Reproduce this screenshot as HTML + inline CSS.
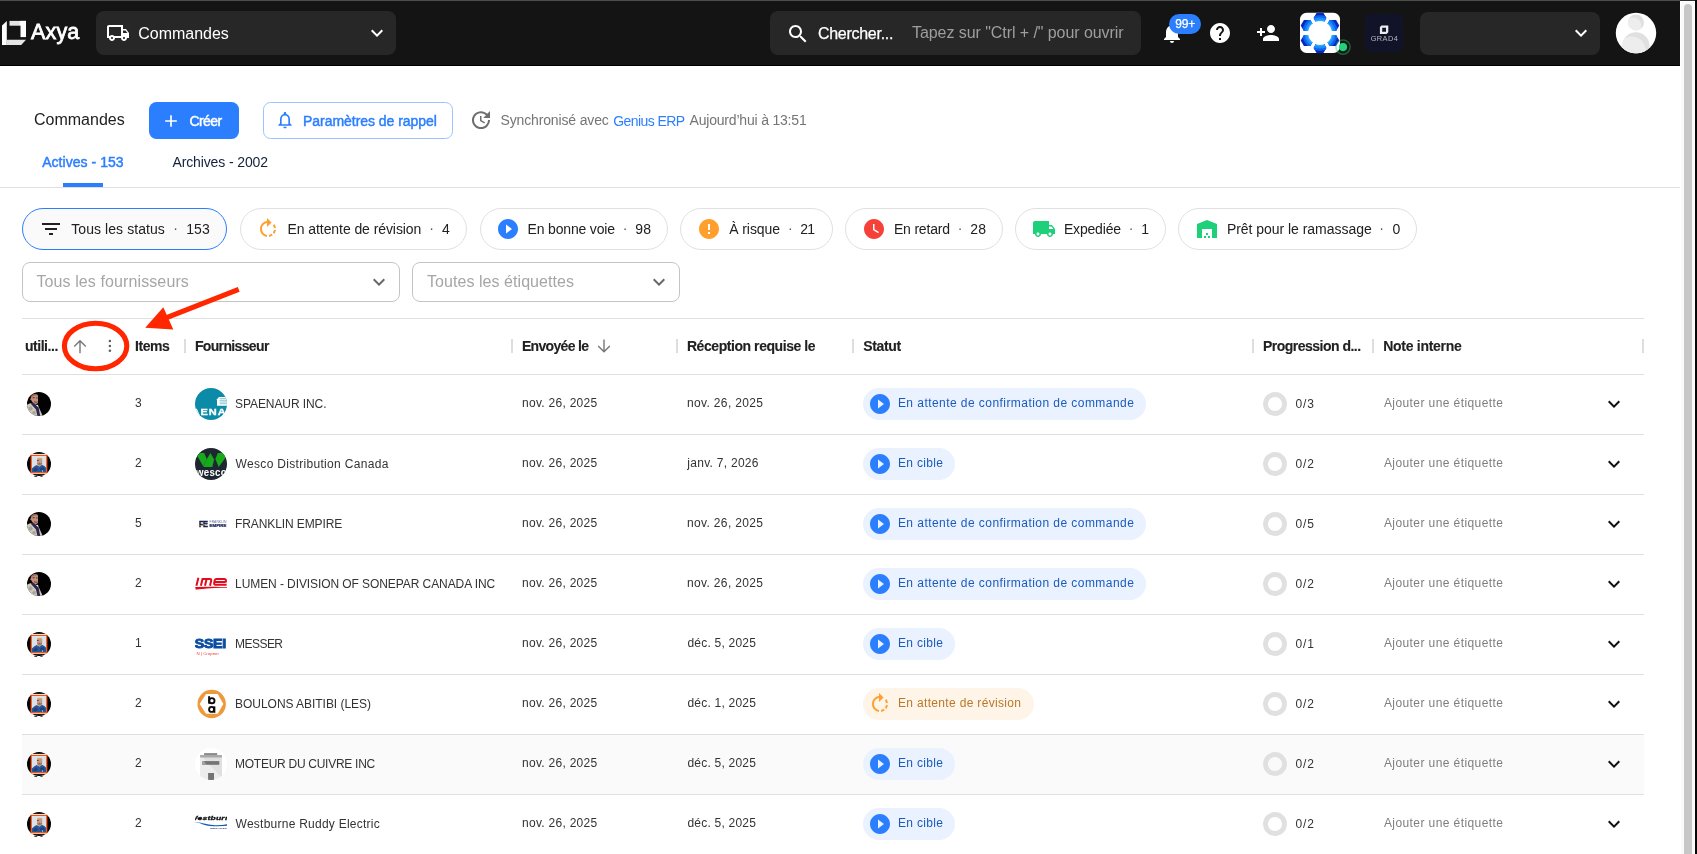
<!DOCTYPE html>
<html lang="fr"><head><meta charset="utf-8"><title>Axya - Commandes</title>
<style>
html,body{margin:0;padding:0}
body{width:1697px;height:854px;overflow:hidden;background:#fff;position:relative;font-family:"Liberation Sans",Arial,sans-serif}
.a{position:absolute;box-sizing:border-box;display:block}
.t{position:absolute;white-space:pre;line-height:normal}
</style></head><body><div class="a" style="left:0;top:0;width:1697px;height:854px;overflow:hidden;will-change:transform">
<div class="a" style="left:0px;top:0px;width:1680px;height:65px;background:#141414"></div>
<div class="a" style="left:0px;top:65px;width:1680px;height:1px;background:#000"></div>
<div class="a" style="left:0px;top:0px;width:1680px;height:1px;background:#4a4f47"></div>
<div class="a" style="left:1680px;top:0px;width:15px;height:1px;background:#2b3029"></div>
<div class="a" style="left:1680px;top:1px;width:15px;height:853px;background:#fff"></div>
<div class="a" style="left:1681px;top:2px;width:13px;height:852px;background:#fafafa"></div>
<div class="a" style="left:1684px;top:4px;width:8px;height:856px;background:#c7c7c7;border-radius:4px"></div>
<div class="a" style="left:1695px;top:0px;width:2px;height:854px;background:#050807"></div>
<svg class="a" style="left:0;top:18px" width="30" height="30" viewBox="0 18 30 30">
<defs><linearGradient id="lg1" x1="0" x2="1" y1="0" y2="0"><stop offset="0" stop-color="#e4e4e4"/><stop offset=".58" stop-color="#e4e4e4"/><stop offset=".68" stop-color="#fff"/><stop offset="1" stop-color="#fff"/></linearGradient>
<linearGradient id="lg2" x1="0" x2="1" y1="0" y2="0"><stop offset="0" stop-color="#fff"/><stop offset=".05" stop-color="#d8d8d8"/><stop offset=".14" stop-color="#e6e6e6"/><stop offset="1" stop-color="#e6e6e6"/></linearGradient></defs>
<path fill="#fff" d="M2 25.4 L6.8 20.9 V44.9 H2 Z"/>
<rect x="9.5" y="20.9" width="16.5" height="4.8" fill="url(#lg1)"/>
<rect x="20.5" y="20.9" width="5.5" height="16.2" fill="#fff"/>
<path fill="url(#lg2)" d="M6.8 39.8 H26 L21.2 44.9 H6.8 Z"/>
</svg>
<div class="a" style="left:96px;top:11px;width:300px;height:44px;background:#272727;border-radius:8px"></div>
<svg class="a" style="left:106px;top:21px" width="24" height="24" viewBox="0 0 24 24"><path fill="#fff" d="M20 8h-3V4H3c-1.1 0-2 .9-2 2v11h2c0 1.66 1.34 3 3 3s3-1.34 3-3h6c0 1.66 1.34 3 3 3s3-1.34 3-3h2v-5l-3-4zm-.5 1.5l1.96 2.5H17V9.5h2.5zM6 18c-.55 0-1-.45-1-1s.45-1 1-1 1 .45 1 1-.45 1-1 1zm2.22-3c-.55-.61-1.33-1-2.22-1s-1.67.39-2.22 1H3V6h12v9H8.22zM18 18c-.55 0-1-.45-1-1s.45-1 1-1 1 .45 1 1-.45 1-1 1z"/></svg>
<svg class="a" style="left:365px;top:21px" width="24" height="24" viewBox="0 0 24 24"><path fill="#fff" d="M7.41 8.59L12 13.17l4.59-4.58L18 10l-6 6-6-6 1.41-1.41z"/></svg>
<div class="a" style="left:770px;top:11px;width:370.5px;height:43.5px;background:#272727;border-radius:8px"></div>
<svg class="a" style="left:785.75px;top:22px" width="24" height="24" viewBox="0 0 24 24"><path fill="#fff" d="M15.5 14h-.79l-.28-.27C15.41 12.59 16 11.11 16 9.5 16 5.91 13.09 3 9.5 3S3 5.91 3 9.5 5.91 16 9.5 16c1.61 0 3.09-.59 4.23-1.57l.27.28v.79l5 4.99L20.49 19l-4.99-5zm-6 0C7.01 14 5 11.99 5 9.5S7.01 5 9.5 5 14 7.01 14 9.5 11.99 14 9.5 14z"/></svg>
<svg class="a" style="left:1160px;top:21px" width="24" height="24" viewBox="0 0 24 24"><path fill="#fff" d="M12 22c1.1 0 2-.9 2-2h-4c0 1.1.89 2 2 2zm6-6v-5c0-3.07-1.64-5.64-4.5-6.32V4c0-.83-.67-1.5-1.5-1.5s-1.5.67-1.5 1.5v.68C7.63 5.36 6 7.92 6 11v5l-2 2v1h16v-1l-2-2z"/></svg>
<div class="a" style="left:1169px;top:14px;width:32px;height:20px;background:#2b7fff;border-radius:10px"></div>
<svg class="a" style="left:1208px;top:21px" width="24" height="24" viewBox="0 0 24 24"><path fill="#fff" d="M12 2C6.48 2 2 6.48 2 12s4.48 10 10 10 10-4.48 10-10S17.52 2 12 2zm1 17h-2v-2h2v2zm2.07-7.75l-.9.92C13.45 12.9 13 13.5 13 15h-2v-.5c0-1.1.45-2.1 1.17-2.83l1.24-1.26c.37-.36.59-.86.59-1.41 0-1.1-.9-2-2-2s-2 .9-2 2H8c0-2.21 1.79-4 4-4s4 1.79 4 4c0 .88-.36 1.68-.93 2.25z"/></svg>
<svg class="a" style="left:1256px;top:21px" width="24" height="24" viewBox="0 0 24 24"><path fill="#fff" d="M15 12c2.21 0 4-1.79 4-4s-1.79-4-4-4-4 1.79-4 4 1.79 4 4 4zm-9-2V7H4v3H1v2h3v3h2v-3h3v-2H6zm9 4c-2.67 0-8 1.34-8 4v2h16v-2c0-2.66-5.33-4-8-4z"/></svg>
<svg class="a" style="left:1296px;top:9px" width="58" height="50" viewBox="1296 9 58 50"><defs><clipPath id="ac"><rect x="1300" y="12.8" width="40" height="40.2" rx="6.5"/></clipPath><clipPath id="ah"><polygon points="1326.40,18.10 1323.20,23.64 1316.80,23.64 1313.60,18.10 1316.80,12.56 1323.20,12.56"/><polygon points="1339.30,25.55 1336.10,31.09 1329.70,31.09 1326.50,25.55 1329.70,20.01 1336.10,20.01"/><polygon points="1339.30,40.45 1336.10,45.99 1329.70,45.99 1326.50,40.45 1329.70,34.91 1336.10,34.91"/><polygon points="1326.40,47.90 1323.20,53.44 1316.80,53.44 1313.60,47.90 1316.80,42.36 1323.20,42.36"/><polygon points="1313.50,40.45 1310.30,45.99 1303.90,45.99 1300.70,40.45 1303.90,34.91 1310.30,34.91"/><polygon points="1313.50,25.55 1310.30,31.09 1303.90,31.09 1300.70,25.55 1303.90,20.01 1310.30,20.01"/></clipPath></defs><rect x="1300" y="12.8" width="40" height="40.2" rx="6.5" fill="#fff"/><g clip-path="url(#ac)"><g clip-path="url(#ah)"><circle cx="1320" cy="33" r="30" fill="#0a27bd"/><circle cx="1320" cy="33" r="17.8" fill="#0c63ee"/><circle cx="1320" cy="33" r="15.4" fill="#1b8efa"/><circle cx="1320" cy="33" r="13.4" fill="#2aa6ff"/></g><circle cx="1320" cy="33" r="11.9" fill="#fff"/></g><circle cx="1343" cy="47.1" r="7.1" fill="none" stroke="rgba(31,208,122,.42)" stroke-width="1.5"/><circle cx="1343" cy="47.1" r="4.1" fill="#1fd47c"/></svg>
<div class="a" style="left:1365px;top:14px;width:38px;height:38px;background:#111428;border-radius:6px"></div>
<svg class="a" style="left:1378px;top:24px" width="12" height="12" viewBox="1378 24 12 12"><path fill="#ececec" fill-rule="evenodd" d="M1379.9 27 L1381.6 25.4 H1388.3 V32.3 L1386.6 34 H1379.9 Z M1382.2 27.7 V31.7 H1386 V27.7 Z"/></svg>
<div class="a" style="left:1420px;top:11.5px;width:180px;height:43.0px;background:#272727;border-radius:8px"></div>
<svg class="a" style="left:1569px;top:21px" width="24" height="24" viewBox="0 0 24 24"><path fill="#fff" d="M7.41 8.59L12 13.17l4.59-4.58L18 10l-6 6-6-6 1.41-1.41z"/></svg>
<svg class="a" style="left:1615px;top:12px" width="42" height="42" viewBox="-1 -1 42 42"><defs><clipPath id="uc"><circle cx="20" cy="20" r="20.2"/></clipPath><clipPath id="uh"><circle cx="20" cy="9.4" r="8"/></clipPath><clipPath id="ub"><circle cx="19.9" cy="32.8" r="13.6"/></clipPath></defs><circle cx="20" cy="20" r="20.2" fill="#fff"/><g clip-path="url(#uc)"><circle cx="20" cy="9.4" r="8" fill="#e0e0e0"/><g clip-path="url(#uh)"><circle cx="17" cy="12.6" r="8.2" fill="#ededed"/></g><circle cx="19.9" cy="32.8" r="13.6" fill="#e0e0e0"/><g clip-path="url(#ub)"><circle cx="15.6" cy="37.6" r="14" fill="#ededed"/></g></g></svg>
<div class="a" style="left:149px;top:102px;width:90.25px;height:36.75px;background:#2b7fff;border-radius:7.5px"></div>
<svg class="a" style="left:161.3px;top:110.5px" width="20" height="20" viewBox="0 0 24 24"><path fill="#fff" d="M19 13h-6v6h-2v-6H5v-2h6V5h2v6h6v2z"/></svg>
<div class="a" style="left:263px;top:102px;width:190px;height:36.75px;border:1px solid #9cc3ff;border-radius:7.5px;background:#fff"></div>
<svg class="a" style="left:275px;top:110px" width="20" height="20" viewBox="0 0 24 24"><path fill="#2b7fff" d="M12 22c1.1 0 2-.9 2-2h-4c0 1.1.9 2 2 2zm6-6v-5c0-3.07-1.63-5.64-4.5-6.32V4c0-.83-.67-1.5-1.5-1.5s-1.5.67-1.5 1.5v.68C7.64 5.36 6 7.92 6 11v5l-2 2v1h16v-1l-2-2zm-2 1H8v-6c0-2.48 1.51-4.5 4-4.5s4 2.02 4 4.5v6z"/></svg>
<svg class="a" style="left:469px;top:108.2px" width="24" height="24" viewBox="0 0 24 24"><path fill="#6e6e6e" d="M21 10.12h-6.78l2.74-2.82c-2.73-2.7-7.15-2.8-9.88-.1-2.73 2.71-2.73 7.08 0 9.79s7.15 2.71 9.88 0C18.32 15.65 19 14.08 19 12.1h2c0 1.98-.88 4.55-2.64 6.29-3.51 3.48-9.21 3.48-12.72 0-3.5-3.47-3.53-9.11-.02-12.58s9.14-3.47 12.65 0L21 3v7.12zM12.5 8v4.25l3.5 2.08-.72 1.21L11 13V8h1.5z"/></svg>
<div class="a" style="left:0px;top:187px;width:1680px;height:1px;background:#e0e0e0"></div>
<div class="a" style="left:63px;top:183px;width:40px;height:4px;background:#2b7fff"></div>
<div class="a" style="left:22px;top:208px;width:205px;height:42px;border:1px solid #2b7fff;border-radius:21px;background:#fafafa"></div>
<svg class="a" style="left:39px;top:217px" width="24" height="24" viewBox="0 0 24 24"><path fill="#212121" d="M10 18h4v-2h-4v2zM3 6v2h18V6H3zm3 7h12v-2H6v2z"/></svg>
<div class="a" style="left:239.5px;top:208px;width:227.0px;height:42px;border:1px solid #e0e0e0;border-radius:21px;background:#fff"></div>
<svg class="a" style="left:256px;top:217px" width="24" height="24" viewBox="0 0 24 24"><path fill="#ffa02e" d="M15.55 5.55L11 1v3.07C7.06 4.56 4 7.92 4 12s3.05 7.44 7 7.93v-2.02c-2.84-.48-5-2.94-5-5.91s2.16-5.43 5-5.91V10l4.55-4.45zM19.93 11c-.17-1.39-.72-2.73-1.62-3.89l-1.42 1.42c.54.75.88 1.6 1.02 2.47h2.02zM13 17.9v2.02c1.39-.17 2.74-.71 3.9-1.61l-1.44-1.44c-.75.54-1.59.89-2.46 1.03zm3.89-2.42l1.42 1.41c.9-1.16 1.45-2.5 1.62-3.89h-2.02c-.14.87-.48 1.72-1.02 2.48z"/></svg>
<div class="a" style="left:479.5px;top:208px;width:188.25px;height:42px;border:1px solid #e0e0e0;border-radius:21px;background:#fff"></div>
<svg class="a" style="left:496.25px;top:217px" width="24" height="24" viewBox="0 0 24 24"><path fill="#2b7fff" d="M12 2C6.48 2 2 6.48 2 12s4.48 10 10 10 10-4.48 10-10S17.52 2 12 2zm-2 14.5v-9l6 4.5-6 4.5z"/></svg>
<div class="a" style="left:680.25px;top:208px;width:152.25px;height:42px;border:1px solid #e0e0e0;border-radius:21px;background:#fff"></div>
<svg class="a" style="left:697px;top:217px" width="24" height="24" viewBox="0 0 24 24"><path fill="#ffa02e" d="M12 2C6.48 2 2 6.48 2 12s4.48 10 10 10 10-4.48 10-10S17.52 2 12 2zm1 15h-2v-2h2v2zm0-4h-2V7h2v6z"/></svg>
<div class="a" style="left:845px;top:208px;width:158px;height:42px;border:1px solid #e0e0e0;border-radius:21px;background:#fff"></div>
<svg class="a" style="left:862px;top:217px" width="24" height="24" viewBox="0 0 24 24"><path fill="#f6413a" d="M12 2C6.5 2 2 6.5 2 12s4.5 10 10 10 10-4.5 10-10S17.5 2 12 2zm4.2 14.2L11 13V7h1.5v5.2l4.5 2.7-.8 1.3z"/></svg>
<div class="a" style="left:1015px;top:208px;width:150.5px;height:42px;border:1px solid #e0e0e0;border-radius:21px;background:#fff"></div>
<svg class="a" style="left:1032px;top:217px" width="24" height="24" viewBox="0 0 24 24"><path fill="#1fd07a" d="M20 8h-3V4H3c-1.1 0-2 .9-2 2v11h2c0 1.66 1.34 3 3 3s3-1.34 3-3h6c0 1.66 1.34 3 3 3s3-1.34 3-3h2v-5l-3-4zM6 18.5c-.83 0-1.5-.67-1.5-1.5s.67-1.5 1.5-1.5 1.5.67 1.5 1.5-.67 1.5-1.5 1.5zm13.5-9l1.96 2.5H17V9.5h2.5zm-1.5 9c-.83 0-1.5-.67-1.5-1.5s.67-1.5 1.5-1.5 1.5.67 1.5 1.5-.67 1.5-1.5 1.5z"/></svg>
<div class="a" style="left:1178px;top:208px;width:239px;height:42px;border:1px solid #e0e0e0;border-radius:21px;background:#fff"></div>
<svg class="a" style="left:1195px;top:217px" width="24" height="24" viewBox="0 0 24 24"><path fill="#1fd07a" d="M22 21V7L12 3 2 7v14h5v-9h10v9h5zm-11-2H9v2h2v-2zm2-3h-2v2h2v-2zm2 3h-2v2h2v-2z"/></svg>
<span class="t" style="left:173.17px;top:219.53px;font-size:14px;color:#555">·</span>
<span class="t" style="left:429.17px;top:219.53px;font-size:14px;color:#555">·</span>
<span class="t" style="left:622.67px;top:219.53px;font-size:14px;color:#555">·</span>
<span class="t" style="left:787.92px;top:219.53px;font-size:14px;color:#555">·</span>
<span class="t" style="left:957.67px;top:219.53px;font-size:14px;color:#555">·</span>
<span class="t" style="left:1128.67px;top:219.53px;font-size:14px;color:#555">·</span>
<span class="t" style="left:1379.17px;top:219.53px;font-size:14px;color:#555">·</span>
<div class="a" style="left:22px;top:262px;width:378px;height:40px;border:1px solid #c4c4c4;border-radius:8px;background:#fff"></div>
<div class="a" style="left:412px;top:262px;width:268px;height:40px;border:1px solid #c4c4c4;border-radius:8px;background:#fff"></div>
<svg class="a" style="left:367px;top:269.6px" width="24" height="24" viewBox="0 0 24 24"><path fill="#686868" d="M7.41 8.59L12 13.17l4.59-4.58L18 10l-6 6-6-6 1.41-1.41z"/></svg>
<svg class="a" style="left:647px;top:269.6px" width="24" height="24" viewBox="0 0 24 24"><path fill="#686868" d="M7.41 8.59L12 13.17l4.59-4.58L18 10l-6 6-6-6 1.41-1.41z"/></svg>
<div class="a" style="left:22px;top:735px;width:1622px;height:59px;background:#fafafa"></div>
<div class="a" style="left:22px;top:318px;width:1622px;height:1px;background:#e0e0e0"></div>
<div class="a" style="left:22px;top:374px;width:1622px;height:1px;background:#e0e0e0"></div>
<div class="a" style="left:22px;top:434px;width:1622px;height:1px;background:#e0e0e0"></div>
<div class="a" style="left:22px;top:494px;width:1622px;height:1px;background:#e0e0e0"></div>
<div class="a" style="left:22px;top:554px;width:1622px;height:1px;background:#e0e0e0"></div>
<div class="a" style="left:22px;top:614px;width:1622px;height:1px;background:#e0e0e0"></div>
<div class="a" style="left:22px;top:674px;width:1622px;height:1px;background:#e0e0e0"></div>
<div class="a" style="left:22px;top:734px;width:1622px;height:1px;background:#e0e0e0"></div>
<div class="a" style="left:22px;top:794px;width:1622px;height:1px;background:#e0e0e0"></div>
<div class="a" style="left:22px;top:854px;width:1622px;height:1px;background:#e0e0e0"></div>
<div class="a" style="left:184px;top:339.2px;width:2px;height:13.4px;background:#dedede"></div>
<div class="a" style="left:511px;top:339.2px;width:2px;height:13.4px;background:#dedede"></div>
<div class="a" style="left:676px;top:339.2px;width:2px;height:13.4px;background:#dedede"></div>
<div class="a" style="left:852px;top:339.2px;width:2px;height:13.4px;background:#dedede"></div>
<div class="a" style="left:1252px;top:339.2px;width:2px;height:13.4px;background:#dedede"></div>
<div class="a" style="left:1372px;top:339.2px;width:2px;height:13.4px;background:#dedede"></div>
<div class="a" style="left:1642px;top:339.2px;width:2px;height:13.4px;background:#dedede"></div>
<svg class="a" style="left:72px;top:338.5px" width="16" height="16" viewBox="0 0 16 16"><path fill="none" stroke="#787878" stroke-width="1.4" d="M8 14.2 V2 M2.2 7.6 L8 1.8 L13.8 7.6"/></svg>
<svg class="a" style="left:596px;top:338.5px" width="16" height="16" viewBox="0 0 16 16"><path fill="none" stroke="#787878" stroke-width="1.4" d="M8 .6 V13 M2.2 7 L8 12.8 L13.8 7"/></svg>
<svg class="a" style="left:104px;top:338px" width="12" height="17" viewBox="0 0 12 17"><g fill="#5e5e5e"><circle cx="5.9" cy="3" r="1.25"/><circle cx="5.9" cy="7.9" r="1.25"/><circle cx="5.9" cy="12.8" r="1.25"/></g></svg>
<svg class="a" style="left:27px;top:392px" width="24" height="24" viewBox="0 0 24 24"><defs><clipPath id="ca0"><circle cx="12" cy="12" r="12"/></clipPath></defs><circle cx="12" cy="12" r="12" fill="#020202"/><g clip-path="url(#ca0)"><path d="M-1 13.6 Q2 11.2 5 11 L11 13.4 L16 24.6 H-1 Z" fill="#cfc9bc"/><path d="M1 16 L4 14 L6 17 L3 19Z M5 20 L8 18.6 L9 21.6 L6 23Z" fill="#a9a59b"/><path d="M3.6 11.4 L6 10.6 L11.6 15.4 L13.2 24 L10.4 24 L9 17.6 Z" fill="#2b2650"/><path d="M3.9 4.6 Q5.2 1.7 8.2 1.9 Q10.4 2 11 3.4 V11 Q9.6 12.6 7.6 11.8 Q4.6 10.4 3.9 7.6 Z" fill="#c48f7b"/><path d="M3.9 4.6 Q5.2 1.7 8.2 1.9 Q10.4 2 11 3.4 Q8 2.8 5.4 4.4 Q4.6 5 4.3 6.2 Z" fill="#8b6656"/><path d="M5.6 5.4 L7.4 5 L7.6 6 L5.8 6.4Z M9 5.6 L10.6 5.4 L10.6 6.4 L9.2 6.4Z M7 9.2 Q9 10.2 10.8 9.4 L10.6 10.2 Q8.8 10.9 7 10Z" fill="#4a2f2a"/><circle cx="10.4" cy="13.6" r=".8" fill="#f4f1ea"/><circle cx="3.6" cy="7.2" r=".7" fill="#b5534a"/></g></svg>
<svg class="a" style="left:195px;top:388px" width="32" height="32" viewBox="0 0 32 32"><defs><clipPath id="l0"><circle cx="16" cy="16" r="16"/></clipPath></defs><circle cx="16" cy="16" r="16" fill="#0b8ba7"/><g clip-path="url(#l0)"><text transform="translate(-3.3 27.2) scale(1.22 1)" x="0" y="0" font-family="Liberation Sans,Arial,sans-serif" font-size="9" font-weight="700" fill="#fff" stroke="#fff" stroke-width=".35" letter-spacing="0.8">AENAU</text><path d="M22 11.2 L24 9.1 H32 V17.8 H22 Z" fill="#fff"/><path d="M24.6 10.6 H32 M24.6 12.3 H32 M24.6 14 H32 M24.6 15.7 H32" stroke="#0b8ba7" stroke-width=".6" opacity=".8"/></g></svg>
<div class="a" style="left:863px;top:388px;width:283.25px;height:32px;background:#eaf2ff;border-radius:16px"></div>
<svg class="a" style="left:868.25px;top:392px" width="24" height="24" viewBox="0 0 24 24"><path fill="#2b7fff" d="M12 2C6.48 2 2 6.48 2 12s4.48 10 10 10 10-4.48 10-10S17.52 2 12 2zm-2 14.5v-9l6 4.5-6 4.5z"/></svg>
<svg class="a" style="left:1263px;top:392px" width="24" height="24" viewBox="0 0 24 24"><circle cx="12" cy="12" r="9.5" fill="none" stroke="#e0e0e0" stroke-width="4.8"/></svg>
<svg class="a" style="left:1602.4px;top:392.0px" width="24" height="24" viewBox="0 0 24 24"><path fill="#111" d="M7.41 8.59L12 13.17l4.59-4.58L18 10l-6 6-6-6 1.41-1.41z"/></svg>
<svg class="a" style="left:27px;top:452px" width="24" height="25" viewBox="0 0 24 25"><defs><clipPath id="cb1"><circle cx="12" cy="12" r="12"/></clipPath></defs><g clip-path="url(#cb1)"><rect x="0" y="0" width="24" height="24" fill="#030303"/><rect x="3" y="1.9" width="18" height="1.1" fill="#fff"/><rect x="3" y="21.1" width="18" height="1" fill="#fff"/><rect x="4.2" y="3.4" width="15.6" height="17.3" fill="#dde0e7" stroke="#ff4d0a" stroke-width="1.15"/><path d="M4.9 20.1 V16.4 Q7 14.2 9.6 13 L12.4 14.6 L15 12.8 Q17.6 13.6 19.1 15.8 V20.1 Z" fill="#2a5596"/><path d="M6 18 L9 15.4 L11 17.8 L8 19.8Z M13 16.6 L16.4 15 L17.6 18 L14 19.4Z" fill="#1d3f7a"/><path d="M10 6.6 Q12.6 5.2 15.2 6.8 V11.6 Q14.2 14.4 12.6 14.4 Q10.8 14.2 10 11.4 Z" fill="#c99a82"/><path d="M9.9 7.4 Q10.4 5.6 12.8 5.7 Q14.8 5.8 15.3 7 Q12.6 6.4 9.9 7.4Z" fill="#d8a95c"/><path d="M10.2 10.4 Q12.6 12.6 15 10.6 V12 Q12.8 14.6 10.4 12.2Z" fill="#8d7a6c"/><circle cx="12.5" cy="11.3" r=".7" fill="#d8473f"/><circle cx="13.6" cy="8.3" r=".6" fill="#7fb2d8"/><rect x="10.2" y="8" width="1.4" height="1" fill="#3a3a3a"/><rect x="14.9" y="18.2" width=".8" height="1.6" fill="#e8e2d0"/></g><path d="M7.4 24.5 H10.2 M13.4 24.4 H15.6" stroke="#111" stroke-width=".8"/></svg>
<svg class="a" style="left:195px;top:448px" width="32" height="32" viewBox="0 0 32 32"><defs><clipPath id="l1"><circle cx="16" cy="16" r="16"/></clipPath></defs><circle cx="16" cy="16" r="16" fill="#1e2731"/><g clip-path="url(#l1)"><path d="M2 7.4 L5.2 4.9 H9.2 L11.8 11 L8.4 18.6 Z" fill="#17a81b"/><path d="M15.4 5 L19.1 11.5 L17.3 19 H8.5 L10.4 13.4 Z" fill="#17a81b"/><path d="M22.8 5 H28.6 L31 9 L23.7 19 L20.4 11 Z" fill="#17a81b"/><text transform="translate(1 27.9) scale(.88 1)" x="0" y="0" font-family="Liberation Sans,Arial,sans-serif" font-size="11" font-weight="700" fill="#fff" letter-spacing=".3">wesco</text></g></svg>
<div class="a" style="left:863px;top:448px;width:92px;height:32px;background:#eaf2ff;border-radius:16px"></div>
<svg class="a" style="left:868.25px;top:452px" width="24" height="24" viewBox="0 0 24 24"><path fill="#2b7fff" d="M12 2C6.48 2 2 6.48 2 12s4.48 10 10 10 10-4.48 10-10S17.52 2 12 2zm-2 14.5v-9l6 4.5-6 4.5z"/></svg>
<svg class="a" style="left:1263px;top:452px" width="24" height="24" viewBox="0 0 24 24"><circle cx="12" cy="12" r="9.5" fill="none" stroke="#e0e0e0" stroke-width="4.8"/></svg>
<svg class="a" style="left:1602.4px;top:452.0px" width="24" height="24" viewBox="0 0 24 24"><path fill="#111" d="M7.41 8.59L12 13.17l4.59-4.58L18 10l-6 6-6-6 1.41-1.41z"/></svg>
<svg class="a" style="left:27px;top:512px" width="24" height="24" viewBox="0 0 24 24"><defs><clipPath id="ca2"><circle cx="12" cy="12" r="12"/></clipPath></defs><circle cx="12" cy="12" r="12" fill="#020202"/><g clip-path="url(#ca2)"><path d="M-1 13.6 Q2 11.2 5 11 L11 13.4 L16 24.6 H-1 Z" fill="#cfc9bc"/><path d="M1 16 L4 14 L6 17 L3 19Z M5 20 L8 18.6 L9 21.6 L6 23Z" fill="#a9a59b"/><path d="M3.6 11.4 L6 10.6 L11.6 15.4 L13.2 24 L10.4 24 L9 17.6 Z" fill="#2b2650"/><path d="M3.9 4.6 Q5.2 1.7 8.2 1.9 Q10.4 2 11 3.4 V11 Q9.6 12.6 7.6 11.8 Q4.6 10.4 3.9 7.6 Z" fill="#c48f7b"/><path d="M3.9 4.6 Q5.2 1.7 8.2 1.9 Q10.4 2 11 3.4 Q8 2.8 5.4 4.4 Q4.6 5 4.3 6.2 Z" fill="#8b6656"/><path d="M5.6 5.4 L7.4 5 L7.6 6 L5.8 6.4Z M9 5.6 L10.6 5.4 L10.6 6.4 L9.2 6.4Z M7 9.2 Q9 10.2 10.8 9.4 L10.6 10.2 Q8.8 10.9 7 10Z" fill="#4a2f2a"/><circle cx="10.4" cy="13.6" r=".8" fill="#f4f1ea"/><circle cx="3.6" cy="7.2" r=".7" fill="#b5534a"/></g></svg>
<svg class="a" style="left:195px;top:508px" width="32" height="32" viewBox="0 0 32 32"><text transform="translate(4 19) scale(.8 1)" x="0" y="0" font-family="Liberation Sans,Arial,sans-serif" font-size="9.2" font-weight="700" fill="#141f4d" letter-spacing="-.6" stroke="#141f4d" stroke-width=".6">FE</text><path d="M1 17.5 L7.6 16.8 L12.4 15.2 L8 17.4 Z" fill="#f2b632"/><text transform="translate(14.6 15.3) scale(.85 1)" x="0" y="0" font-family="Liberation Sans,Arial,sans-serif" font-size="4" fill="#6a7396">FRANKLIN</text><text transform="translate(14.6 19) scale(1.1 1)" x="0" y="0" font-family="Liberation Sans,Arial,sans-serif" font-size="4" font-weight="700" fill="#1b2655" stroke="#1b2655" stroke-width=".25">EMPIRE</text></svg>
<div class="a" style="left:863px;top:508px;width:283.25px;height:32px;background:#eaf2ff;border-radius:16px"></div>
<svg class="a" style="left:868.25px;top:512px" width="24" height="24" viewBox="0 0 24 24"><path fill="#2b7fff" d="M12 2C6.48 2 2 6.48 2 12s4.48 10 10 10 10-4.48 10-10S17.52 2 12 2zm-2 14.5v-9l6 4.5-6 4.5z"/></svg>
<svg class="a" style="left:1263px;top:512px" width="24" height="24" viewBox="0 0 24 24"><circle cx="12" cy="12" r="9.5" fill="none" stroke="#e0e0e0" stroke-width="4.8"/></svg>
<svg class="a" style="left:1602.4px;top:512.0px" width="24" height="24" viewBox="0 0 24 24"><path fill="#111" d="M7.41 8.59L12 13.17l4.59-4.58L18 10l-6 6-6-6 1.41-1.41z"/></svg>
<svg class="a" style="left:27px;top:572px" width="24" height="24" viewBox="0 0 24 24"><defs><clipPath id="ca3"><circle cx="12" cy="12" r="12"/></clipPath></defs><circle cx="12" cy="12" r="12" fill="#020202"/><g clip-path="url(#ca3)"><path d="M-1 13.6 Q2 11.2 5 11 L11 13.4 L16 24.6 H-1 Z" fill="#cfc9bc"/><path d="M1 16 L4 14 L6 17 L3 19Z M5 20 L8 18.6 L9 21.6 L6 23Z" fill="#a9a59b"/><path d="M3.6 11.4 L6 10.6 L11.6 15.4 L13.2 24 L10.4 24 L9 17.6 Z" fill="#2b2650"/><path d="M3.9 4.6 Q5.2 1.7 8.2 1.9 Q10.4 2 11 3.4 V11 Q9.6 12.6 7.6 11.8 Q4.6 10.4 3.9 7.6 Z" fill="#c48f7b"/><path d="M3.9 4.6 Q5.2 1.7 8.2 1.9 Q10.4 2 11 3.4 Q8 2.8 5.4 4.4 Q4.6 5 4.3 6.2 Z" fill="#8b6656"/><path d="M5.6 5.4 L7.4 5 L7.6 6 L5.8 6.4Z M9 5.6 L10.6 5.4 L10.6 6.4 L9.2 6.4Z M7 9.2 Q9 10.2 10.8 9.4 L10.6 10.2 Q8.8 10.9 7 10Z" fill="#4a2f2a"/><circle cx="10.4" cy="13.6" r=".8" fill="#f4f1ea"/><circle cx="3.6" cy="7.2" r=".7" fill="#b5534a"/></g></svg>
<svg class="a" style="left:195px;top:568px" width="32" height="32" viewBox="0 0 32 32"><g fill="none" stroke="#e30b1c" stroke-width="2"><path d="M1.4 17.8 L3.4 9.8"/><path d="M5.9 17.8 L7.5 10.9 H14.8 Q16.6 10.9 16.2 12.6 L15 17.8 M11.6 10.9 L10 17.8"/><path d="M30.6 13.9 H20 M30.9 14.6 V12.6 Q30.9 10.9 29.2 10.9 H21.6 Q20 10.9 19.7 12.4 L19.2 15 Q18.9 16.7 20.5 16.7 H31.6"/></g><path d="M.2 19 Q10 18.4 20 18.8 T32 18.9 L32 19.8 Q22 19.6 12 20.4 T.8 21.8 Z" fill="#e30b1c"/></svg>
<div class="a" style="left:863px;top:568px;width:283.25px;height:32px;background:#eaf2ff;border-radius:16px"></div>
<svg class="a" style="left:868.25px;top:572px" width="24" height="24" viewBox="0 0 24 24"><path fill="#2b7fff" d="M12 2C6.48 2 2 6.48 2 12s4.48 10 10 10 10-4.48 10-10S17.52 2 12 2zm-2 14.5v-9l6 4.5-6 4.5z"/></svg>
<svg class="a" style="left:1263px;top:572px" width="24" height="24" viewBox="0 0 24 24"><circle cx="12" cy="12" r="9.5" fill="none" stroke="#e0e0e0" stroke-width="4.8"/></svg>
<svg class="a" style="left:1602.4px;top:572.0px" width="24" height="24" viewBox="0 0 24 24"><path fill="#111" d="M7.41 8.59L12 13.17l4.59-4.58L18 10l-6 6-6-6 1.41-1.41z"/></svg>
<svg class="a" style="left:27px;top:632px" width="24" height="25" viewBox="0 0 24 25"><defs><clipPath id="cb4"><circle cx="12" cy="12" r="12"/></clipPath></defs><g clip-path="url(#cb4)"><rect x="0" y="0" width="24" height="24" fill="#030303"/><rect x="3" y="1.9" width="18" height="1.1" fill="#fff"/><rect x="3" y="21.1" width="18" height="1" fill="#fff"/><rect x="4.2" y="3.4" width="15.6" height="17.3" fill="#dde0e7" stroke="#ff4d0a" stroke-width="1.15"/><path d="M4.9 20.1 V16.4 Q7 14.2 9.6 13 L12.4 14.6 L15 12.8 Q17.6 13.6 19.1 15.8 V20.1 Z" fill="#2a5596"/><path d="M6 18 L9 15.4 L11 17.8 L8 19.8Z M13 16.6 L16.4 15 L17.6 18 L14 19.4Z" fill="#1d3f7a"/><path d="M10 6.6 Q12.6 5.2 15.2 6.8 V11.6 Q14.2 14.4 12.6 14.4 Q10.8 14.2 10 11.4 Z" fill="#c99a82"/><path d="M9.9 7.4 Q10.4 5.6 12.8 5.7 Q14.8 5.8 15.3 7 Q12.6 6.4 9.9 7.4Z" fill="#d8a95c"/><path d="M10.2 10.4 Q12.6 12.6 15 10.6 V12 Q12.8 14.6 10.4 12.2Z" fill="#8d7a6c"/><circle cx="12.5" cy="11.3" r=".7" fill="#d8473f"/><circle cx="13.6" cy="8.3" r=".6" fill="#7fb2d8"/><rect x="10.2" y="8" width="1.4" height="1" fill="#3a3a3a"/><rect x="14.9" y="18.2" width=".8" height="1.6" fill="#e8e2d0"/></g><path d="M7.4 24.5 H10.2 M13.4 24.4 H15.6" stroke="#111" stroke-width=".8"/></svg>
<svg class="a" style="left:195px;top:628px" width="32" height="32" viewBox="0 0 32 32"><defs><clipPath id="l4"><rect x="0" y="0" width="32" height="32"/></clipPath></defs><g clip-path="url(#l4)"><text transform="translate(-.3 19.9) scale(1.16 1)" x="0" y="0" font-family="Liberation Sans,Arial,sans-serif" font-size="12.2" font-weight="700" fill="#0c4da2" stroke="#0c4da2" stroke-width=".9" letter-spacing="-.2">SSEI</text><text x="1.4" y="26.6" font-family="Liberation Sans,Arial,sans-serif" font-size="4.4" fill="#e8453f">N | Cropner</text></g></svg>
<div class="a" style="left:863px;top:628px;width:92px;height:32px;background:#eaf2ff;border-radius:16px"></div>
<svg class="a" style="left:868.25px;top:632px" width="24" height="24" viewBox="0 0 24 24"><path fill="#2b7fff" d="M12 2C6.48 2 2 6.48 2 12s4.48 10 10 10 10-4.48 10-10S17.52 2 12 2zm-2 14.5v-9l6 4.5-6 4.5z"/></svg>
<svg class="a" style="left:1263px;top:632px" width="24" height="24" viewBox="0 0 24 24"><circle cx="12" cy="12" r="9.5" fill="none" stroke="#e0e0e0" stroke-width="4.8"/></svg>
<svg class="a" style="left:1602.4px;top:632.0px" width="24" height="24" viewBox="0 0 24 24"><path fill="#111" d="M7.41 8.59L12 13.17l4.59-4.58L18 10l-6 6-6-6 1.41-1.41z"/></svg>
<svg class="a" style="left:27px;top:692px" width="24" height="25" viewBox="0 0 24 25"><defs><clipPath id="cb5"><circle cx="12" cy="12" r="12"/></clipPath></defs><g clip-path="url(#cb5)"><rect x="0" y="0" width="24" height="24" fill="#030303"/><rect x="3" y="1.9" width="18" height="1.1" fill="#fff"/><rect x="3" y="21.1" width="18" height="1" fill="#fff"/><rect x="4.2" y="3.4" width="15.6" height="17.3" fill="#dde0e7" stroke="#ff4d0a" stroke-width="1.15"/><path d="M4.9 20.1 V16.4 Q7 14.2 9.6 13 L12.4 14.6 L15 12.8 Q17.6 13.6 19.1 15.8 V20.1 Z" fill="#2a5596"/><path d="M6 18 L9 15.4 L11 17.8 L8 19.8Z M13 16.6 L16.4 15 L17.6 18 L14 19.4Z" fill="#1d3f7a"/><path d="M10 6.6 Q12.6 5.2 15.2 6.8 V11.6 Q14.2 14.4 12.6 14.4 Q10.8 14.2 10 11.4 Z" fill="#c99a82"/><path d="M9.9 7.4 Q10.4 5.6 12.8 5.7 Q14.8 5.8 15.3 7 Q12.6 6.4 9.9 7.4Z" fill="#d8a95c"/><path d="M10.2 10.4 Q12.6 12.6 15 10.6 V12 Q12.8 14.6 10.4 12.2Z" fill="#8d7a6c"/><circle cx="12.5" cy="11.3" r=".7" fill="#d8473f"/><circle cx="13.6" cy="8.3" r=".6" fill="#7fb2d8"/><rect x="10.2" y="8" width="1.4" height="1" fill="#3a3a3a"/><rect x="14.9" y="18.2" width=".8" height="1.6" fill="#e8e2d0"/></g><path d="M7.4 24.5 H10.2 M13.4 24.4 H15.6" stroke="#111" stroke-width=".8"/></svg>
<svg class="a" style="left:195px;top:688px" width="32" height="32" viewBox="0 0 32 32"><circle cx="16.7" cy="16" r="14.2" fill="#ec9a3c"/><path d="M4.7 16 L11 6 H22.7 L28.3 16 L22.7 25.7 H11 Z" fill="#fff"/><g fill="none" stroke="#0b0b0b" stroke-width="1.9"><path d="M14.1 8.2 V15.7"/><circle cx="16.9" cy="12.7" r="2.6"/><circle cx="16.6" cy="21.4" r="2.5"/><path d="M19.4 18.4 V24.8"/></g></svg>
<div class="a" style="left:863px;top:688px;width:171.4px;height:32px;background:#fff4e8;border-radius:16px"></div>
<svg class="a" style="left:868px;top:692px" width="24" height="24" viewBox="0 0 24 24"><path fill="#ffa02e" d="M15.55 5.55L11 1v3.07C7.06 4.56 4 7.92 4 12s3.05 7.44 7 7.93v-2.02c-2.84-.48-5-2.94-5-5.91s2.16-5.43 5-5.91V10l4.55-4.45zM19.93 11c-.17-1.39-.72-2.73-1.62-3.89l-1.42 1.42c.54.75.88 1.6 1.02 2.47h2.02zM13 17.9v2.02c1.39-.17 2.74-.71 3.9-1.61l-1.44-1.44c-.75.54-1.59.89-2.46 1.03zm3.89-2.42l1.42 1.41c.9-1.16 1.45-2.5 1.62-3.89h-2.02c-.14.87-.48 1.72-1.02 2.48z"/></svg>
<svg class="a" style="left:1263px;top:692px" width="24" height="24" viewBox="0 0 24 24"><circle cx="12" cy="12" r="9.5" fill="none" stroke="#e0e0e0" stroke-width="4.8"/></svg>
<svg class="a" style="left:1602.4px;top:692.0px" width="24" height="24" viewBox="0 0 24 24"><path fill="#111" d="M7.41 8.59L12 13.17l4.59-4.58L18 10l-6 6-6-6 1.41-1.41z"/></svg>
<svg class="a" style="left:27px;top:752px" width="24" height="25" viewBox="0 0 24 25"><defs><clipPath id="cb6"><circle cx="12" cy="12" r="12"/></clipPath></defs><g clip-path="url(#cb6)"><rect x="0" y="0" width="24" height="24" fill="#030303"/><rect x="3" y="1.9" width="18" height="1.1" fill="#fff"/><rect x="3" y="21.1" width="18" height="1" fill="#fff"/><rect x="4.2" y="3.4" width="15.6" height="17.3" fill="#dde0e7" stroke="#ff4d0a" stroke-width="1.15"/><path d="M4.9 20.1 V16.4 Q7 14.2 9.6 13 L12.4 14.6 L15 12.8 Q17.6 13.6 19.1 15.8 V20.1 Z" fill="#2a5596"/><path d="M6 18 L9 15.4 L11 17.8 L8 19.8Z M13 16.6 L16.4 15 L17.6 18 L14 19.4Z" fill="#1d3f7a"/><path d="M10 6.6 Q12.6 5.2 15.2 6.8 V11.6 Q14.2 14.4 12.6 14.4 Q10.8 14.2 10 11.4 Z" fill="#c99a82"/><path d="M9.9 7.4 Q10.4 5.6 12.8 5.7 Q14.8 5.8 15.3 7 Q12.6 6.4 9.9 7.4Z" fill="#d8a95c"/><path d="M10.2 10.4 Q12.6 12.6 15 10.6 V12 Q12.8 14.6 10.4 12.2Z" fill="#8d7a6c"/><circle cx="12.5" cy="11.3" r=".7" fill="#d8473f"/><circle cx="13.6" cy="8.3" r=".6" fill="#7fb2d8"/><rect x="10.2" y="8" width="1.4" height="1" fill="#3a3a3a"/><rect x="14.9" y="18.2" width=".8" height="1.6" fill="#e8e2d0"/></g><path d="M7.4 24.5 H10.2 M13.4 24.4 H15.6" stroke="#111" stroke-width=".8"/></svg>
<svg class="a" style="left:195px;top:748px" width="32" height="32" viewBox="0 0 32 32"><defs><clipPath id="l6"><circle cx="16" cy="16" r="16"/></clipPath></defs><circle cx="16" cy="16" r="16" fill="#fff"/><g clip-path="url(#l6)"><rect x="5.1" y="9.6" width="21.8" height="24" fill="#ececec"/><path d="M8 9.6 H26.9 V30 Z" fill="#dfdfdf"/><rect x="9.1" y="5.1" width="13.1" height="2" fill="#8a8a8a"/><rect x="5.1" y="7" width="21.8" height="2.6" fill="#a9a9a9"/><rect x="7" y="13.1" width="17.3" height="3.7" fill="#737373"/><path d="M7 13.1 H8.8 L11.6 16.8 H7 Z" fill="#a3a3a3"/><rect x="13.1" y="25" width="5.9" height="7" fill="#737373"/></g></svg>
<div class="a" style="left:863px;top:748px;width:92px;height:32px;background:#eaf2ff;border-radius:16px"></div>
<svg class="a" style="left:868.25px;top:752px" width="24" height="24" viewBox="0 0 24 24"><path fill="#2b7fff" d="M12 2C6.48 2 2 6.48 2 12s4.48 10 10 10 10-4.48 10-10S17.52 2 12 2zm-2 14.5v-9l6 4.5-6 4.5z"/></svg>
<svg class="a" style="left:1263px;top:752px" width="24" height="24" viewBox="0 0 24 24"><circle cx="12" cy="12" r="9.5" fill="none" stroke="#e0e0e0" stroke-width="4.8"/></svg>
<svg class="a" style="left:1602.4px;top:752.0px" width="24" height="24" viewBox="0 0 24 24"><path fill="#111" d="M7.41 8.59L12 13.17l4.59-4.58L18 10l-6 6-6-6 1.41-1.41z"/></svg>
<svg class="a" style="left:27px;top:812px" width="24" height="25" viewBox="0 0 24 25"><defs><clipPath id="cb7"><circle cx="12" cy="12" r="12"/></clipPath></defs><g clip-path="url(#cb7)"><rect x="0" y="0" width="24" height="24" fill="#030303"/><rect x="3" y="1.9" width="18" height="1.1" fill="#fff"/><rect x="3" y="21.1" width="18" height="1" fill="#fff"/><rect x="4.2" y="3.4" width="15.6" height="17.3" fill="#dde0e7" stroke="#ff4d0a" stroke-width="1.15"/><path d="M4.9 20.1 V16.4 Q7 14.2 9.6 13 L12.4 14.6 L15 12.8 Q17.6 13.6 19.1 15.8 V20.1 Z" fill="#2a5596"/><path d="M6 18 L9 15.4 L11 17.8 L8 19.8Z M13 16.6 L16.4 15 L17.6 18 L14 19.4Z" fill="#1d3f7a"/><path d="M10 6.6 Q12.6 5.2 15.2 6.8 V11.6 Q14.2 14.4 12.6 14.4 Q10.8 14.2 10 11.4 Z" fill="#c99a82"/><path d="M9.9 7.4 Q10.4 5.6 12.8 5.7 Q14.8 5.8 15.3 7 Q12.6 6.4 9.9 7.4Z" fill="#d8a95c"/><path d="M10.2 10.4 Q12.6 12.6 15 10.6 V12 Q12.8 14.6 10.4 12.2Z" fill="#8d7a6c"/><circle cx="12.5" cy="11.3" r=".7" fill="#d8473f"/><circle cx="13.6" cy="8.3" r=".6" fill="#7fb2d8"/><rect x="10.2" y="8" width="1.4" height="1" fill="#3a3a3a"/><rect x="14.9" y="18.2" width=".8" height="1.6" fill="#e8e2d0"/></g><path d="M7.4 24.5 H10.2 M13.4 24.4 H15.6" stroke="#111" stroke-width=".8"/></svg>
<svg class="a" style="left:195px;top:808px" width="32" height="32" viewBox="0 0 32 32"><defs><clipPath id="l7"><rect x="0" y="0" width="32" height="32"/></clipPath><linearGradient id="wg" x1="0" x2="1" y1="0" y2="0"><stop offset="0" stop-color="#6aa7e8"/><stop offset=".25" stop-color="#0a5cc2"/><stop offset="1" stop-color="#0a4fb0"/></linearGradient></defs><g clip-path="url(#l7)"><text transform="translate(-5.6 12) scale(1.62 1)" x="0" y="0" font-family="Liberation Sans,Arial,sans-serif" font-size="5.3" font-weight="700" font-style="italic" fill="#0d0f12" stroke="#0d0f12" stroke-width=".25" letter-spacing=".12">Westburne</text><path d="M.6 14 Q5 14.2 9 15.6 T20 17.2 T32 16.2 L32 17.8 Q26 18.4 19 18.2 T8 16.4 T.6 14.6 Z" fill="url(#wg)"/><text x="15" y="20.9" font-family="Liberation Sans,Arial,sans-serif" font-size="2.5" font-weight="700" fill="#1a2a6a">RUDDY ELECTRIC</text></g></svg>
<div class="a" style="left:863px;top:808px;width:92px;height:32px;background:#eaf2ff;border-radius:16px"></div>
<svg class="a" style="left:868.25px;top:812px" width="24" height="24" viewBox="0 0 24 24"><path fill="#2b7fff" d="M12 2C6.48 2 2 6.48 2 12s4.48 10 10 10 10-4.48 10-10S17.52 2 12 2zm-2 14.5v-9l6 4.5-6 4.5z"/></svg>
<svg class="a" style="left:1263px;top:812px" width="24" height="24" viewBox="0 0 24 24"><circle cx="12" cy="12" r="9.5" fill="none" stroke="#e0e0e0" stroke-width="4.8"/></svg>
<svg class="a" style="left:1602.4px;top:812.0px" width="24" height="24" viewBox="0 0 24 24"><path fill="#111" d="M7.41 8.59L12 13.17l4.59-4.58L18 10l-6 6-6-6 1.41-1.41z"/></svg>
<span class="t" style="left:30.96px;top:20.34px;font-size:21.5px;font-weight:400;-webkit-text-stroke:0.8px #ffffff;color:#ffffff;letter-spacing:0.172px">Axya</span>
<span class="t" style="left:138.34px;top:24.72px;font-size:16px;font-weight:400;color:#ffffff;letter-spacing:-0.023px">Commandes</span>
<span class="t" style="left:817.91px;top:24.92px;font-size:16px;font-weight:400;-webkit-text-stroke:0.25px #ffffff;color:#ffffff;letter-spacing:-0.272px">Chercher...</span>
<span class="t" style="left:912.04px;top:23.52px;font-size:16px;font-weight:400;color:#9e9e9e;letter-spacing:-0.068px">Tapez sur "Ctrl + /" pour ouvrir</span>
<span class="t" style="left:1175.18px;top:16.54px;font-size:12px;font-weight:400;-webkit-text-stroke:0.25px #ffffff;color:#ffffff;letter-spacing:-0.160px">99+</span>
<span class="t" style="left:1370.66px;top:33.70px;font-size:7.4px;font-weight:400;color:#b8b8c2;letter-spacing:0.430px">GRAD4</span>
<span class="t" style="left:33.91px;top:110.52px;font-size:16px;font-weight:400;color:#212121;letter-spacing:0.011px">Commandes</span>
<span class="t" style="left:189.41px;top:112.83px;font-size:14px;font-weight:400;-webkit-text-stroke:0.45px #ffffff;color:#ffffff;letter-spacing:-0.584px">Créer</span>
<span class="t" style="left:303.04px;top:112.83px;font-size:14px;font-weight:400;-webkit-text-stroke:0.45px #2b7fff;color:#2b7fff;letter-spacing:-0.037px">Paramètres de rappel</span>
<span class="t" style="left:500.54px;top:112.33px;font-size:14px;font-weight:400;color:#757575;letter-spacing:-0.147px">Synchronisé avec</span>
<span class="t" style="left:613.28px;top:113.33px;font-size:14px;font-weight:400;color:#2b7fff;letter-spacing:-0.582px">Genius ERP</span>
<span class="t" style="left:689.53px;top:112.33px;font-size:14px;font-weight:400;color:#757575;letter-spacing:-0.193px">Aujourd’hui à 13:51</span>
<span class="t" style="left:42.16px;top:154.33px;font-size:14px;font-weight:400;-webkit-text-stroke:0.45px #2b7fff;color:#2b7fff;letter-spacing:0.041px">Actives - 153</span>
<span class="t" style="left:172.41px;top:154.33px;font-size:14px;font-weight:400;color:#14213d;letter-spacing:-0.114px">Archives - 2002</span>
<span class="t" style="left:71.28px;top:221.08px;font-size:14px;font-weight:400;color:#212121;letter-spacing:0.068px">Tous les status</span>
<span class="t" style="left:186.16px;top:221.08px;font-size:14px;font-weight:400;color:#212121;letter-spacing:0.098px">153</span>
<span class="t" style="left:287.54px;top:221.08px;font-size:14px;font-weight:400;color:#212121;letter-spacing:-0.077px">En attente de révision</span>
<span class="t" style="left:442.04px;top:221.08px;font-size:14px;font-weight:400;color:#212121;letter-spacing:0.000px">4</span>
<span class="t" style="left:527.53px;top:221.08px;font-size:14px;font-weight:400;color:#212121;letter-spacing:-0.165px">En bonne voie</span>
<span class="t" style="left:635.28px;top:221.08px;font-size:14px;font-weight:400;color:#212121;letter-spacing:0.227px">98</span>
<span class="t" style="left:729.16px;top:221.08px;font-size:14px;font-weight:400;color:#212121;letter-spacing:-0.061px">À risque</span>
<span class="t" style="left:800.16px;top:221.08px;font-size:14px;font-weight:400;color:#212121;letter-spacing:-0.773px">21</span>
<span class="t" style="left:893.91px;top:221.08px;font-size:14px;font-weight:400;color:#212121;letter-spacing:-0.177px">En retard</span>
<span class="t" style="left:970.28px;top:221.08px;font-size:14px;font-weight:400;color:#212121;letter-spacing:0.227px">28</span>
<span class="t" style="left:1063.91px;top:221.08px;font-size:14px;font-weight:400;color:#212121;letter-spacing:-0.173px">Expediée</span>
<span class="t" style="left:1141.16px;top:221.08px;font-size:14px;font-weight:400;color:#212121;letter-spacing:0.000px">1</span>
<span class="t" style="left:1226.91px;top:221.08px;font-size:14px;font-weight:400;color:#212121;letter-spacing:-0.035px">Prêt pour le ramassage</span>
<span class="t" style="left:1392.41px;top:221.08px;font-size:14px;font-weight:400;color:#212121;letter-spacing:0.000px">0</span>
<span class="t" style="left:36.41px;top:272.52px;font-size:16px;font-weight:400;color:#a6a6a6;letter-spacing:0.106px">Tous les fournisseurs</span>
<span class="t" style="left:427.04px;top:272.52px;font-size:16px;font-weight:400;color:#a6a6a6;letter-spacing:0.052px">Toutes les étiquettes</span>
<span class="t" style="left:24.91px;top:338.33px;font-size:14px;font-weight:700;-webkit-text-stroke:0.12px #212121;color:#212121;letter-spacing:-0.448px">utili...</span>
<span class="t" style="left:134.91px;top:338.33px;font-size:14px;font-weight:700;-webkit-text-stroke:0.12px #212121;color:#212121;letter-spacing:-0.412px">Items</span>
<span class="t" style="left:194.91px;top:338.33px;font-size:14px;font-weight:700;-webkit-text-stroke:0.12px #212121;color:#212121;letter-spacing:-0.648px">Fournisseur</span>
<span class="t" style="left:521.91px;top:338.33px;font-size:14px;font-weight:700;-webkit-text-stroke:0.12px #212121;color:#212121;letter-spacing:-0.678px">Envoyée le</span>
<span class="t" style="left:686.91px;top:338.33px;font-size:14px;font-weight:700;-webkit-text-stroke:0.12px #212121;color:#212121;letter-spacing:-0.435px">Réception requise le</span>
<span class="t" style="left:863.28px;top:338.33px;font-size:14px;font-weight:700;-webkit-text-stroke:0.12px #212121;color:#212121;letter-spacing:-0.348px">Statut</span>
<span class="t" style="left:1263.04px;top:338.33px;font-size:14px;font-weight:700;-webkit-text-stroke:0.12px #212121;color:#212121;letter-spacing:-0.517px">Progression d...</span>
<span class="t" style="left:1383.29px;top:338.33px;font-size:14px;font-weight:700;-webkit-text-stroke:0.12px #212121;color:#212121;letter-spacing:-0.296px">Note interne</span>
<span class="t" style="left:135.03px;top:396.14px;font-size:12px;font-weight:400;color:#333333;letter-spacing:0.450px">3</span>
<span class="t" style="left:235.08px;top:397.14px;font-size:12px;font-weight:400;color:#333333;letter-spacing:-0.090px">SPAENAUR INC.</span>
<span class="t" style="left:522.03px;top:396.14px;font-size:12px;font-weight:400;color:#333333;letter-spacing:0.279px">nov. 26, 2025</span>
<span class="t" style="left:687.03px;top:396.14px;font-size:12px;font-weight:400;color:#333333;letter-spacing:0.341px">nov. 26, 2025</span>
<span class="t" style="left:897.93px;top:396.14px;font-size:12px;font-weight:400;color:#1b5bbd;letter-spacing:0.444px">En attente de confirmation de commande</span>
<span class="t" style="left:1295.53px;top:397.14px;font-size:12px;font-weight:400;color:#333333;letter-spacing:0.814px">0/3</span>
<span class="t" style="left:1383.90px;top:396.14px;font-size:12px;font-weight:400;color:#7e7e7e;letter-spacing:0.416px">Ajouter une étiquette</span>
<span class="t" style="left:135.03px;top:456.14px;font-size:12px;font-weight:400;color:#333333;letter-spacing:0.450px">2</span>
<span class="t" style="left:235.58px;top:457.14px;font-size:12px;font-weight:400;color:#333333;letter-spacing:0.316px">Wesco Distribution Canada</span>
<span class="t" style="left:522.03px;top:456.14px;font-size:12px;font-weight:400;color:#333333;letter-spacing:0.279px">nov. 26, 2025</span>
<span class="t" style="left:687.28px;top:456.14px;font-size:12px;font-weight:400;color:#333333;letter-spacing:0.284px">janv. 7, 2026</span>
<span class="t" style="left:897.93px;top:456.14px;font-size:12px;font-weight:400;color:#1b5bbd;letter-spacing:0.334px">En cible</span>
<span class="t" style="left:1295.53px;top:457.14px;font-size:12px;font-weight:400;color:#333333;letter-spacing:0.814px">0/2</span>
<span class="t" style="left:1383.90px;top:456.14px;font-size:12px;font-weight:400;color:#7e7e7e;letter-spacing:0.416px">Ajouter une étiquette</span>
<span class="t" style="left:135.03px;top:516.14px;font-size:12px;font-weight:400;color:#333333;letter-spacing:0.450px">5</span>
<span class="t" style="left:235.08px;top:517.14px;font-size:12px;font-weight:400;color:#333333;letter-spacing:-0.111px">FRANKLIN EMPIRE</span>
<span class="t" style="left:522.03px;top:516.14px;font-size:12px;font-weight:400;color:#333333;letter-spacing:0.279px">nov. 26, 2025</span>
<span class="t" style="left:687.03px;top:516.14px;font-size:12px;font-weight:400;color:#333333;letter-spacing:0.341px">nov. 26, 2025</span>
<span class="t" style="left:897.93px;top:516.14px;font-size:12px;font-weight:400;color:#1b5bbd;letter-spacing:0.444px">En attente de confirmation de commande</span>
<span class="t" style="left:1295.53px;top:517.14px;font-size:12px;font-weight:400;color:#333333;letter-spacing:0.814px">0/5</span>
<span class="t" style="left:1383.90px;top:516.14px;font-size:12px;font-weight:400;color:#7e7e7e;letter-spacing:0.416px">Ajouter une étiquette</span>
<span class="t" style="left:135.03px;top:576.14px;font-size:12px;font-weight:400;color:#333333;letter-spacing:0.450px">2</span>
<span class="t" style="left:235.08px;top:577.14px;font-size:12px;font-weight:400;color:#333333;letter-spacing:-0.082px">LUMEN - DIVISION OF SONEPAR CANADA INC</span>
<span class="t" style="left:522.03px;top:576.14px;font-size:12px;font-weight:400;color:#333333;letter-spacing:0.279px">nov. 26, 2025</span>
<span class="t" style="left:687.03px;top:576.14px;font-size:12px;font-weight:400;color:#333333;letter-spacing:0.341px">nov. 26, 2025</span>
<span class="t" style="left:897.93px;top:576.14px;font-size:12px;font-weight:400;color:#1b5bbd;letter-spacing:0.444px">En attente de confirmation de commande</span>
<span class="t" style="left:1295.53px;top:577.14px;font-size:12px;font-weight:400;color:#333333;letter-spacing:0.814px">0/2</span>
<span class="t" style="left:1383.90px;top:576.14px;font-size:12px;font-weight:400;color:#7e7e7e;letter-spacing:0.416px">Ajouter une étiquette</span>
<span class="t" style="left:135.03px;top:636.14px;font-size:12px;font-weight:400;color:#333333;letter-spacing:0.450px">1</span>
<span class="t" style="left:235.08px;top:637.14px;font-size:12px;font-weight:400;color:#333333;letter-spacing:-0.549px">MESSER</span>
<span class="t" style="left:522.03px;top:636.14px;font-size:12px;font-weight:400;color:#333333;letter-spacing:0.279px">nov. 26, 2025</span>
<span class="t" style="left:687.48px;top:636.14px;font-size:12px;font-weight:400;color:#333333;letter-spacing:0.216px">déc. 5, 2025</span>
<span class="t" style="left:897.93px;top:636.14px;font-size:12px;font-weight:400;color:#1b5bbd;letter-spacing:0.334px">En cible</span>
<span class="t" style="left:1295.53px;top:637.14px;font-size:12px;font-weight:400;color:#333333;letter-spacing:0.814px">0/1</span>
<span class="t" style="left:1383.90px;top:636.14px;font-size:12px;font-weight:400;color:#7e7e7e;letter-spacing:0.416px">Ajouter une étiquette</span>
<span class="t" style="left:135.03px;top:696.14px;font-size:12px;font-weight:400;color:#333333;letter-spacing:0.450px">2</span>
<span class="t" style="left:235.08px;top:697.14px;font-size:12px;font-weight:400;color:#333333;letter-spacing:-0.041px">BOULONS ABITIBI (LES)</span>
<span class="t" style="left:522.03px;top:696.14px;font-size:12px;font-weight:400;color:#333333;letter-spacing:0.279px">nov. 26, 2025</span>
<span class="t" style="left:687.48px;top:696.14px;font-size:12px;font-weight:400;color:#333333;letter-spacing:0.216px">déc. 1, 2025</span>
<span class="t" style="left:898.03px;top:696.14px;font-size:12px;font-weight:400;color:#b9782a;letter-spacing:0.329px">En attente de révision</span>
<span class="t" style="left:1295.53px;top:697.14px;font-size:12px;font-weight:400;color:#333333;letter-spacing:0.814px">0/2</span>
<span class="t" style="left:1383.90px;top:696.14px;font-size:12px;font-weight:400;color:#7e7e7e;letter-spacing:0.416px">Ajouter une étiquette</span>
<span class="t" style="left:135.03px;top:756.14px;font-size:12px;font-weight:400;color:#333333;letter-spacing:0.450px">2</span>
<span class="t" style="left:235.08px;top:757.14px;font-size:12px;font-weight:400;color:#333333;letter-spacing:-0.274px">MOTEUR DU CUIVRE INC</span>
<span class="t" style="left:522.03px;top:756.14px;font-size:12px;font-weight:400;color:#333333;letter-spacing:0.279px">nov. 26, 2025</span>
<span class="t" style="left:687.48px;top:756.14px;font-size:12px;font-weight:400;color:#333333;letter-spacing:0.216px">déc. 5, 2025</span>
<span class="t" style="left:897.93px;top:756.14px;font-size:12px;font-weight:400;color:#1b5bbd;letter-spacing:0.334px">En cible</span>
<span class="t" style="left:1295.53px;top:757.14px;font-size:12px;font-weight:400;color:#333333;letter-spacing:0.814px">0/2</span>
<span class="t" style="left:1383.90px;top:756.14px;font-size:12px;font-weight:400;color:#7e7e7e;letter-spacing:0.416px">Ajouter une étiquette</span>
<span class="t" style="left:135.03px;top:816.14px;font-size:12px;font-weight:400;color:#333333;letter-spacing:0.450px">2</span>
<span class="t" style="left:235.58px;top:817.14px;font-size:12px;font-weight:400;color:#333333;letter-spacing:0.245px">Westburne Ruddy Electric</span>
<span class="t" style="left:522.03px;top:816.14px;font-size:12px;font-weight:400;color:#333333;letter-spacing:0.279px">nov. 26, 2025</span>
<span class="t" style="left:687.48px;top:816.14px;font-size:12px;font-weight:400;color:#333333;letter-spacing:0.216px">déc. 5, 2025</span>
<span class="t" style="left:897.93px;top:816.14px;font-size:12px;font-weight:400;color:#1b5bbd;letter-spacing:0.334px">En cible</span>
<span class="t" style="left:1295.53px;top:817.14px;font-size:12px;font-weight:400;color:#333333;letter-spacing:0.814px">0/2</span>
<span class="t" style="left:1383.90px;top:816.14px;font-size:12px;font-weight:400;color:#7e7e7e;letter-spacing:0.416px">Ajouter une étiquette</span>
<svg class="a" style="left:50px;top:280px" width="210" height="100" viewBox="50 280 210 100"><ellipse cx="95.6" cy="346" rx="31.2" ry="22.8" fill="none" stroke="#ff2600" stroke-width="5.1"/><path d="M238.7 289.3 L166 317.9" stroke="#ff2600" stroke-width="5" fill="none"/><path d="M145.2 327.7 L163.3 307.3 L173.3 329.5 Z" fill="#ff2600"/></svg>
</div></body></html>
